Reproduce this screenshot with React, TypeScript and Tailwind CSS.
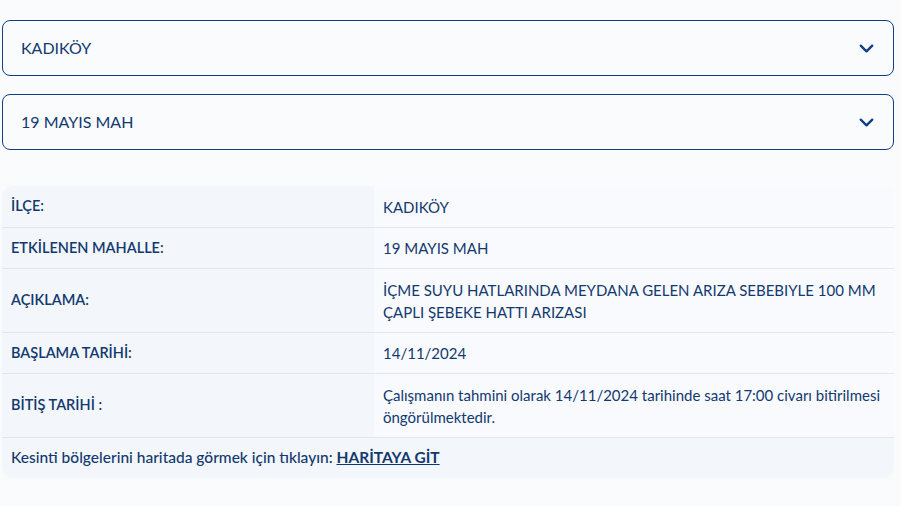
import { ChevronDown } from "lucide-react";

const ROWS: { label: string; value: string }[] = [
  { label: "İLÇE:", value: "KADIKÖY" },
  { label: "ETKİLENEN MAHALLE:", value: "19 MAYIS MAH" },
  {
    label: "AÇIKLAMA:",
    value: "İÇME SUYU HATLARINDA MEYDANA GELEN ARIZA SEBEBIYLE 100 MM ÇAPLI ŞEBEKE HATTI ARIZASI",
  },
  { label: "BAŞLAMA TARİHİ:", value: "14/11/2024" },
  {
    label: "BİTİŞ TARİHİ :",
    value: "Çalışmanın tahmini olarak 14/11/2024 tarihinde saat 17:00 civarı bitirilmesi öngörülmektedir.",
  },
];

function SelectBox({ value }: { value: string }) {
  return (
    <div className="h-[56px] rounded-lg border border-[#0e3e86] flex items-center justify-between pl-[18px] pr-[15px] bg-[#f9fbfd]">
      <span className="text-[16px] text-[#12396f]">{value}</span>
      <ChevronDown className="w-[23px] h-[23px] text-[#0e3e86]" strokeWidth={2.4} />
    </div>
  );
}

export default function App() {
  return (
    <div
      className="min-h-[506px] bg-[#f9fbfd] pt-[20px] pl-[2px] pr-[7px]"
      style={{ fontFamily: "Lato, 'Noto Sans', sans-serif" }}
    >
      <div className="flex flex-col gap-[18px]">
        <SelectBox value="KADIKÖY" />
        <SelectBox value="19 MAYIS MAH" />
      </div>

      <div className="mt-[36px] rounded-xl overflow-hidden bg-[#f3f6fa] text-[#12396f]">
        {ROWS.map((r) => (
          <div key={r.label} className="flex border-b border-[#e3e6ea]">
            <div className="w-[372px] shrink-0 flex items-center px-[9px] text-[14.5px] font-semibold bg-[#f3f6fa]">
              {r.label}
            </div>
            <div className="flex-1 pl-[9px] pr-[8px] pt-[9.5px] pb-[9px] text-[15px] leading-[22px] bg-[#f8fafd]">
              {r.value}
            </div>
          </div>
        ))}
        <div className="h-[40px] flex items-center px-[9px] text-[15.5px] font-medium">
          Kesinti bölgelerini haritada görmek için tıklayın:&nbsp;
          <a href="#" className="font-bold underline">
            HARİTAYA GİT
          </a>
        </div>
      </div>
    </div>
  );
}
